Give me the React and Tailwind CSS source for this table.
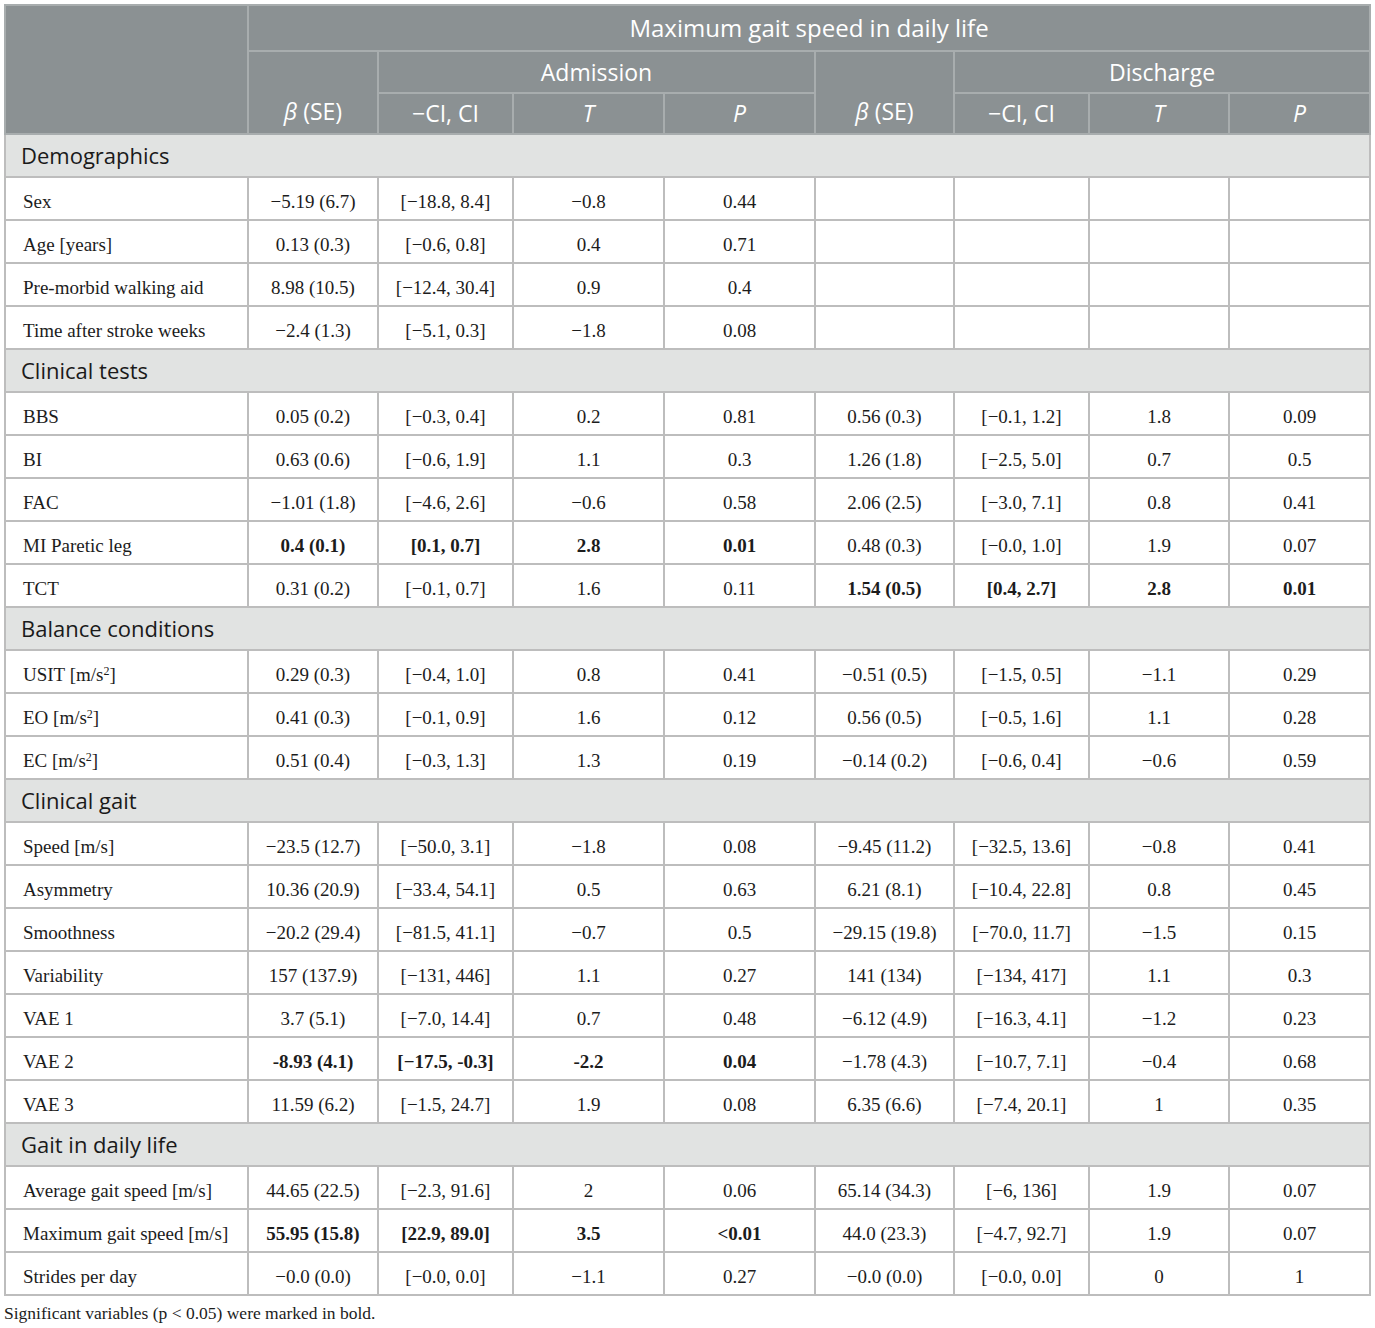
const M = '\u2212'

const SECTIONS = [
  {
    title: 'Demographics',
    rows: [
      { label: 'Sex', a: [`${M}5.19 (6.7)`, `[${M}18.8, 8.4]`, `${M}0.8`, '0.44'], d: ['', '', '', ''] },
      { label: 'Age [years]', a: ['0.13 (0.3)', `[${M}0.6, 0.8]`, '0.4', '0.71'], d: ['', '', '', ''] },
      { label: 'Pre-morbid walking aid', a: ['8.98 (10.5)', `[${M}12.4, 30.4]`, '0.9', '0.4'], d: ['', '', '', ''] },
      { label: 'Time after stroke weeks', a: [`${M}2.4 (1.3)`, `[${M}5.1, 0.3]`, `${M}1.8`, '0.08'], d: ['', '', '', ''] },
    ],
  },
  {
    title: 'Clinical tests',
    rows: [
      { label: 'BBS', a: ['0.05 (0.2)', `[${M}0.3, 0.4]`, '0.2', '0.81'], d: ['0.56 (0.3)', `[${M}0.1, 1.2]`, '1.8', '0.09'] },
      { label: 'BI', a: ['0.63 (0.6)', `[${M}0.6, 1.9]`, '1.1', '0.3'], d: ['1.26 (1.8)', `[${M}2.5, 5.0]`, '0.7', '0.5'] },
      { label: 'FAC', a: [`${M}1.01 (1.8)`, `[${M}4.6, 2.6]`, `${M}0.6`, '0.58'], d: ['2.06 (2.5)', `[${M}3.0, 7.1]`, '0.8', '0.41'] },
      { label: 'MI Paretic leg', a: ['0.4 (0.1)', '[0.1, 0.7]', '2.8', '0.01'], d: ['0.48 (0.3)', `[${M}0.0, 1.0]`, '1.9', '0.07'], ba: true },
      { label: 'TCT', a: ['0.31 (0.2)', `[${M}0.1, 0.7]`, '1.6', '0.11'], d: ['1.54 (0.5)', '[0.4, 2.7]', '2.8', '0.01'], bd: true },
    ],
  },
  {
    title: 'Balance conditions',
    rows: [
      { label: 'USIT', sq: true, a: ['0.29 (0.3)', `[${M}0.4, 1.0]`, '0.8', '0.41'], d: [`${M}0.51 (0.5)`, `[${M}1.5, 0.5]`, `${M}1.1`, '0.29'] },
      { label: 'EO', sq: true, a: ['0.41 (0.3)', `[${M}0.1, 0.9]`, '1.6', '0.12'], d: ['0.56 (0.5)', `[${M}0.5, 1.6]`, '1.1', '0.28'] },
      { label: 'EC', sq: true, a: ['0.51 (0.4)', `[${M}0.3, 1.3]`, '1.3', '0.19'], d: [`${M}0.14 (0.2)`, `[${M}0.6, 0.4]`, `${M}0.6`, '0.59'] },
    ],
  },
  {
    title: 'Clinical gait',
    rows: [
      { label: 'Speed [m/s]', a: [`${M}23.5 (12.7)`, `[${M}50.0, 3.1]`, `${M}1.8`, '0.08'], d: [`${M}9.45 (11.2)`, `[${M}32.5, 13.6]`, `${M}0.8`, '0.41'] },
      { label: 'Asymmetry', a: ['10.36 (20.9)', `[${M}33.4, 54.1]`, '0.5', '0.63'], d: ['6.21 (8.1)', `[${M}10.4, 22.8]`, '0.8', '0.45'] },
      { label: 'Smoothness', a: [`${M}20.2 (29.4)`, `[${M}81.5, 41.1]`, `${M}0.7`, '0.5'], d: [`${M}29.15 (19.8)`, `[${M}70.0, 11.7]`, `${M}1.5`, '0.15'] },
      { label: 'Variability', a: ['157 (137.9)', `[${M}131, 446]`, '1.1', '0.27'], d: ['141 (134)', `[${M}134, 417]`, '1.1', '0.3'] },
      { label: 'VAE 1', a: ['3.7 (5.1)', `[${M}7.0, 14.4]`, '0.7', '0.48'], d: [`${M}6.12 (4.9)`, `[${M}16.3, 4.1]`, `${M}1.2`, '0.23'] },
      { label: 'VAE 2', a: ['-8.93 (4.1)', `[${M}17.5, -0.3]`, '-2.2', '0.04'], d: [`${M}1.78 (4.3)`, `[${M}10.7, 7.1]`, `${M}0.4`, '0.68'], ba: true },
      { label: 'VAE 3', a: ['11.59 (6.2)', `[${M}1.5, 24.7]`, '1.9', '0.08'], d: ['6.35 (6.6)', `[${M}7.4, 20.1]`, '1', '0.35'] },
    ],
  },
  {
    title: 'Gait in daily life',
    rows: [
      { label: 'Average gait speed [m/s]', a: ['44.65 (22.5)', `[${M}2.3, 91.6]`, '2', '0.06'], d: ['65.14 (34.3)', `[${M}6, 136]`, '1.9', '0.07'] },
      { label: 'Maximum gait speed [m/s]', a: ['55.95 (15.8)', '[22.9, 89.0]', '3.5', '<0.01'], d: ['44.0 (23.3)', `[${M}4.7, 92.7]`, '1.9', '0.07'], ba: true },
      { label: 'Strides per day', a: [`${M}0.0 (0.0)`, `[${M}0.0, 0.0]`, `${M}1.1`, '0.27'], d: [`${M}0.0 (0.0)`, `[${M}0.0, 0.0]`, '0', '1'] },
    ],
  },
]

const WIDTHS = [243, 130, 135, 151, 151, 139, 135, 140, 141]

const sans = "font-['Open_Sans',_'Noto_Sans',_sans-serif]"
const th = `border-2 border-[#a8adae] font-normal text-white text-[23px] ${sans}`
const td = 'border-2 border-[#bdbdbd] text-center pt-[7px]'

function ValueCells({ vals, bold }) {
  return vals.map((v, i) => (
    <td key={i} className={`${td} ${bold ? 'font-bold' : ''}`}>{v}</td>
  ))
}

export default function App() {
  return (
    <div className="bg-white min-h-[1328px] pl-[4px] pt-[4px] text-[#1c1c1c] font-['Liberation_Serif',_'Times_New_Roman',_serif]">
      <table className="border-collapse table-fixed w-[1366px] border-2 border-[#bdbdbd] text-[19px]">
        <colgroup>
          {WIDTHS.map((w, i) => <col key={i} style={{ width: w }} />)}
        </colgroup>
        <thead className="bg-[#8b9193]">
          <tr className="h-[46px]">
            <th rowSpan={3} className={th}></th>
            <th colSpan={8} className={`${th} text-[24px]`}>Maximum gait speed in daily life</th>
          </tr>
          <tr className="h-[42px]">
            <th rowSpan={2} className={`${th} align-bottom pb-[5px]`}><i>β</i> (SE)</th>
            <th colSpan={3} className={th}>Admission</th>
            <th rowSpan={2} className={`${th} align-bottom pb-[5px]`}><i>β</i> (SE)</th>
            <th colSpan={3} className={th}>Discharge</th>
          </tr>
          <tr className="h-[41px]">
            <th className={th}>{M}CI, CI</th>
            <th className={th}><i>T</i></th>
            <th className={th}><i>P</i></th>
            <th className={th}>{M}CI, CI</th>
            <th className={th}><i>T</i></th>
            <th className={th}><i>P</i></th>
          </tr>
        </thead>
        <tbody>
          {SECTIONS.map(s => (
            <Section key={s.title} section={s} />
          ))}
        </tbody>
      </table>
      <p className="text-[17.5px] mt-[4px] text-[#1c1c1c]">Significant variables (p &lt; 0.05) were marked in bold.</p>
    </div>
  )
}

function Section({ section }) {
  return (
    <>
      <tr className="h-[43px] bg-[#e1e3e2]">
        <td colSpan={9} className={`border-2 border-[#bdbdbd] pl-[15px] text-[22px] text-[#1a1a1a] ${sans}`}>{section.title}</td>
      </tr>
      {section.rows.map(r => (
        <tr key={r.label} className="h-[43px]">
          <td className="border-2 border-[#bdbdbd] pl-[17px] pt-[7px]">
            {r.label}{r.sq && <> [m/s<sup className="text-[12px]">2</sup>]</>}
          </td>
          <ValueCells vals={r.a} bold={r.ba} />
          <ValueCells vals={r.d} bold={r.bd} />
        </tr>
      ))}
    </>
  )
}
